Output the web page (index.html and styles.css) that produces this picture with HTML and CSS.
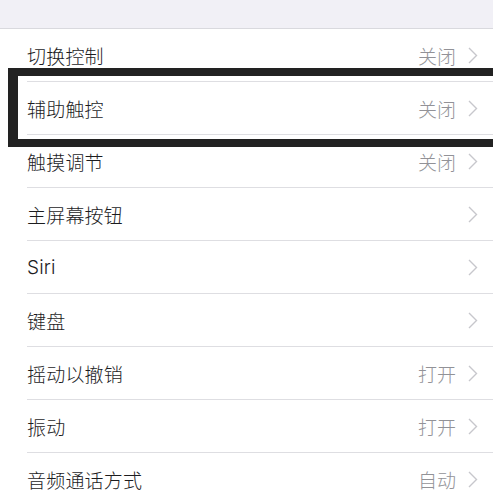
FILE: index.html
```html
<!DOCTYPE html>
<html lang="zh-CN">
<head>
    <meta charset="UTF-8">
    <title>辅助功能</title>
    <link rel="stylesheet" href="styles.css">
</head>
<body>

<div class="top-band"></div>

<ul class="list">
    <li class="row"><span class="label">切换控制</span><span class="value">关闭</span><svg class="chev" viewBox="0 0 10 17"><path d="M1 1 L8.5 8.5 L1 16"/></svg></li>
    <li class="row"><span class="label">辅助触控</span><span class="value">关闭</span><svg class="chev" viewBox="0 0 10 17"><path d="M1 1 L8.5 8.5 L1 16"/></svg></li>
    <li class="row"><span class="label">触摸调节</span><span class="value">关闭</span><svg class="chev" viewBox="0 0 10 17"><path d="M1 1 L8.5 8.5 L1 16"/></svg></li>
    <li class="row"><span class="label">主屏幕按钮</span><span class="value"></span><svg class="chev" viewBox="0 0 10 17"><path d="M1 1 L8.5 8.5 L1 16"/></svg></li>
    <li class="row"><span class="label latin">Siri</span><span class="value"></span><svg class="chev" viewBox="0 0 10 17"><path d="M1 1 L8.5 8.5 L1 16"/></svg></li>
    <li class="row"><span class="label">键盘</span><span class="value"></span><svg class="chev" viewBox="0 0 10 17"><path d="M1 1 L8.5 8.5 L1 16"/></svg></li>
    <li class="row"><span class="label">摇动以撤销</span><span class="value">打开</span><svg class="chev" viewBox="0 0 10 17"><path d="M1 1 L8.5 8.5 L1 16"/></svg></li>
    <li class="row"><span class="label">振动</span><span class="value">打开</span><svg class="chev" viewBox="0 0 10 17"><path d="M1 1 L8.5 8.5 L1 16"/></svg></li>
    <li class="row"><span class="label">音频通话方式</span><span class="value">自动</span><svg class="chev" viewBox="0 0 10 17"><path d="M1 1 L8.5 8.5 L1 16"/></svg></li>
</ul>

<!-- 标注框 -->
<div class="mark"></div>

</body>
</html>
```

FILE: styles.css
```css
body {
    margin: 0;
    background: #fff;
    font-family: "Noto Sans CJK SC", "Noto Sans", sans-serif;
    overflow: hidden;
    position: relative;
}
.top-band {
    height: 28px;
    background: #f1f0f6;
    border-bottom: 1px solid #d9d9de;
}
.list {
    list-style: none;
    margin: 0;
    padding: 0 0 0 27px;
}
.row {
    height: 52px;
    display: flex;
    align-items: center;
    padding-right: 15px;
    border-bottom: 1px solid #dedee2;
}
.label {
    flex: 1;
    font-size: 19px;
    font-weight: 300;
    color: #1c1c1e;
    letter-spacing: 0.2px;
}
.label.latin {
    font-family: "Inter", "Noto Sans", sans-serif;
}
.value {
    font-size: 19px;
    font-weight: 300;
    color: #929297;
    margin-right: 12px;
}
.chev {
    width: 10px;
    height: 17px;
    fill: none;
    stroke: #c7c7cc;
    stroke-width: 1.4;
}
.mark {
    position: absolute;
    left: 8px;
    right: 0;
    top: 68px;
    height: 63px;
    border: 8px solid #222;
    border-left-width: 10px;
    border-right-width: 0;
}
```
